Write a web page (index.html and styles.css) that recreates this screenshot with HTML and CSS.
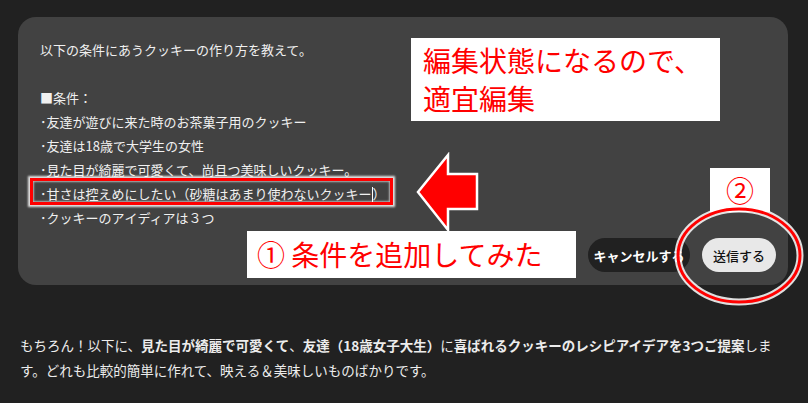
FILE: index.html
```html
<!DOCTYPE html>
<html lang="ja">
<head>
    <meta charset="UTF-8">
    <meta name="viewport" content="width=device-width, initial-scale=1.0">
    <title>編集</title>
    <link rel="stylesheet" href="styles.css">
</head>
<body>
    <div class="page">
        <div class="card">
            <div class="prompt">
                <div>以下の条件にあうクッキーの作り方を教えて。</div>
                <div class="blank"></div>
                <div>■条件：</div>
                <div>･友達が遊びに来た時のお茶菓子用のクッキー</div>
                <div>･友達は18歳で大学生の女性</div>
                <div>･見た目が綺麗で可愛くて、尚且つ美味しいクッキー。</div>
                <div>･甘さは控えめにしたい（砂糖はあまり使わないクッキー<span class="caret"></span>）</div>
                <div>･クッキーのアイディアは３つ</div>
            </div>
            <div class="actions">
                <button class="btn cancel">キャンセルする</button>
                <button class="btn send">送信する</button>
            </div>
        </div>

        <p class="answer">もちろん！以下に、<b>見た目が綺麗で可愛くて</b>、<b>友達（18歳女子大生）</b>に<b>喜ばれるクッキーのレシピアイデアを3つご提案</b>しま<br>す。どれも比較的簡単に作れて、映える＆美味しいものばかりです。</p>

        <!-- annotations -->
        <div class="mark"></div>
        <svg class="arrow" width="68" height="82" viewBox="0 0 68 82">
            <polygon points="4,40 34,3 34,22 63,22 63,57 34,57 34,78" fill="#ff0000" stroke="#fff" stroke-width="2.5"/>
        </svg>
        <div class="note note-edit">編集状態になるので、<br>適宜編集</div>
        <div class="note note-add">① 条件を追加してみた</div>
        <div class="note note-two">②</div>
        <svg class="ring" width="130" height="101" viewBox="0 0 130 101">
            <ellipse cx="65" cy="50.5" rx="61" ry="46.5" fill="none" stroke="#fff" stroke-width="7" opacity="0.85"/>
            <ellipse cx="65" cy="50.5" rx="61" ry="46.5" fill="none" stroke="#ff0000" stroke-width="3"/>
        </svg>
    </div>
</body>
</html>
```

FILE: styles.css
```css
* {
  box-sizing: border-box;
}
body {
  margin: 0;
  background: #212121;
  color: #ececec;
  font-family: "Noto Sans CJK JP", "Noto Sans", sans-serif;
  text-spacing-trim: space-all;
}
.page {
  position: relative;
  width: 808px;
  height: 403px;
  padding: 17px 20px 0 18px;
  overflow: hidden;
}

.card {
  display: flex;
  flex-direction: column;
  height: 268px;
  background: #424242;
  border-radius: 18px;
  padding: 21px 12px 13px 22px;
}
.prompt {
  flex: 1;
  font-size: 13px;
  line-height: 24px;
  color: #f0f0f0;
}
.blank {
  height: 24px;
}
.caret {
  display: inline-block;
  width: 1px;
  height: 15px;
  background: #fff;
  vertical-align: -3px;
}

.actions {
  display: flex;
  justify-content: flex-end;
  gap: 12px;
}
.btn {
  height: 34px;
  border: none;
  border-radius: 17px;
  font-family: inherit;
  font-size: 13px;
  padding: 0;
}
.cancel {
  width: 102px;
  background: #212121;
  color: #fff;
  font-weight: bold;
}
.send {
  width: 74px;
  background: #e8e8e8;
  color: #111;
  font-weight: 500;
}

.answer {
  margin: 48px 0 0 2px;
  font-size: 13.5px;
  line-height: 25px;
  width: 775px;
}
.answer b {
  font-weight: bold;
}

/* annotations on top */
.mark {
  position: absolute;
  left: 30px;
  top: 178px;
  width: 363px;
  height: 27px;
  border: 3px solid #ff0000;
  box-shadow: 0 0 2px 2px rgba(255, 255, 255, 0.85), inset 0 0 2px 1px rgba(255, 255, 255, 0.6);
}
.arrow {
  position: absolute;
  left: 414px;
  top: 152px;
}
.ring {
  position: absolute;
  left: 674px;
  top: 205px;
}
.note {
  position: absolute;
  background: #fff;
  color: #ff0000;
  font-size: 28px;
  line-height: 38px;
}
.note-edit {
  left: 411px;
  top: 38px;
  width: 309px;
  height: 83px;
  padding: 3px 0 0 12px;
}
.note-add {
  left: 247px;
  top: 231px;
  width: 329px;
  height: 47px;
  padding: 4px 0 0 10px;
}
.note-two {
  left: 710px;
  top: 168px;
  width: 60px;
  height: 44px;
  padding-top: 3px;
  text-align: center;
}
```
